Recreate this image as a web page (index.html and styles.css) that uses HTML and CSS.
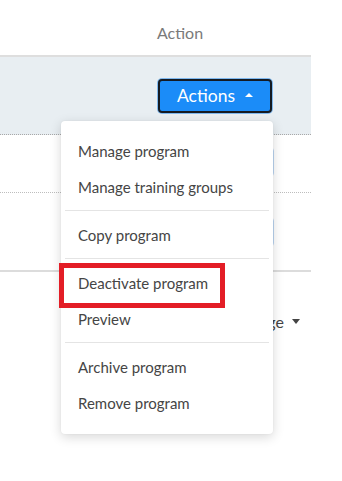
FILE: index.html
```html
<!DOCTYPE html>
<html>
<head>
<meta charset="utf-8">
<link rel="stylesheet" href="styles.css">
</head>
<body>
<div class="page">
  <div class="table">
    <div class="thead">
      <div class="th"></div>
      <div class="th th-action">Action</div>
    </div>
    <div class="row row-active">
      <div class="cell"></div>
      <div class="cell cell-act">
        <div class="dd">
          <button class="btn-actions">Actions <span class="caret-up"></span></button>
          <ul class="menu">
            <li class="item">Manage program</li>
            <li class="item">Manage training groups</li>
            <li class="divider"></li>
            <li class="item">Copy program</li>
            <li class="divider"></li>
            <li class="item">Deactivate program</li>
            <li class="item">Preview</li>
            <li class="divider"></li>
            <li class="item">Archive program</li>
            <li class="item">Remove program</li>
          </ul>
          <div class="annot"></div>
        </div>
      </div>
    </div>
    <div class="row row-mid">
      <div class="cell"></div>
      <div class="cell cell-act"><button class="btn-ghost">Actions</button></div>
    </div>
    <div class="row row-last">
      <div class="cell"></div>
      <div class="cell cell-act"><button class="btn-ghost">Actions</button></div>
    </div>
  </div>
  <div class="pager"><span class="pager-label">Per page</span><span class="caret-down"></span></div>
</div>
</body>
</html>
```

FILE: styles.css
```css
html, body {
  margin: 0;
  padding: 0;
  background: #ffffff;
}
body {
  font-family: "Lato", "Open Sans", "Liberation Sans", sans-serif;
  color: #3a3a3a;
}
.page {
  width: 342px;
  height: 481px;
  overflow: hidden;
}
.table {
  width: 311px;
}
.thead {
  display: grid;
  grid-template-columns: 158px 1fr;
  height: 55px;
  border-bottom: 2px solid #dedede;
  align-items: center;
}
.th-action {
  font-size: 16px;
  color: #7a7a7a;
  padding-top: 9px;
  margin-left: -1px;
}
.row {
  display: grid;
  grid-template-columns: 158px 1fr;
  align-items: center;
}
.row-active {
  height: 77px;
  background: #e8eef2;
  border-bottom: 1px dotted #a8a8a8;
}
.row-mid {
  height: 57px;
  border-bottom: 1px dotted #bdbdbd;
}
.row-last {
  height: 77px;
  border-bottom: 2px solid #dcdcdc;
}
.cell-act {
  display: flex;
  align-items: center;
}
.dd {
  position: relative;
}
.btn-actions {
  display: flex;
  align-items: center;
  justify-content: center;
  gap: 10px;
  width: 114px;
  height: 34px;
  padding: 0 0 0 0;
  background: #1b8cf8;
  border: 2px solid #141a22;
  border-radius: 4px;
  box-shadow: 0 0 0 1px #7fb8ee;
  color: #ffffff;
  font-family: inherit;
  font-size: 17.5px;
}
.caret-up {
  width: 0;
  height: 0;
  border-left: 4px solid transparent;
  border-right: 4px solid transparent;
  border-bottom: 4px solid #ffffff;
  margin-top: -1px;
}
.btn-ghost {
  width: 116px;
  height: 30px;
  background: #ffffff;
  border: 1px solid #bcd6f2;
  border-radius: 4px;
  color: #1b8cf8;
  font-family: inherit;
  font-size: 15px;
}
.row-mid .btn-ghost { margin-top: -4px; }
.menu {
  position: absolute;
  left: -97px;
  top: 42px;
  width: 212px;
  margin: 0;
  padding: 12px 0 13px;
  list-style: none;
  background: #ffffff;
  border-radius: 4px;
  box-shadow: 0 3px 12px rgba(0, 0, 0, 0.16), 0 0 2px rgba(0, 0, 0, 0.06);
  z-index: 5;
}
.item {
  height: 36px;
  line-height: 36px;
  padding-left: 17px;
  font-size: 15px;
  color: #454545;
  white-space: nowrap;
}
.divider {
  height: 1px;
  margin: 5px 4px 6px;
  background: #e4e4e4;
}
.annot {
  position: absolute;
  left: -99px;
  top: 184px;
  width: 156px;
  height: 35px;
  border: 5px solid #e31d26;
  z-index: 6;
}
.pager {
  display: flex;
  justify-content: flex-end;
  align-items: center;
  gap: 8px;
  width: 300px;
  margin-top: 40px;
  font-size: 16px;
  color: #444;
}
.caret-down {
  width: 0;
  height: 0;
  border-left: 4px solid transparent;
  border-right: 4px solid transparent;
  border-top: 5px solid #444;
}
```
